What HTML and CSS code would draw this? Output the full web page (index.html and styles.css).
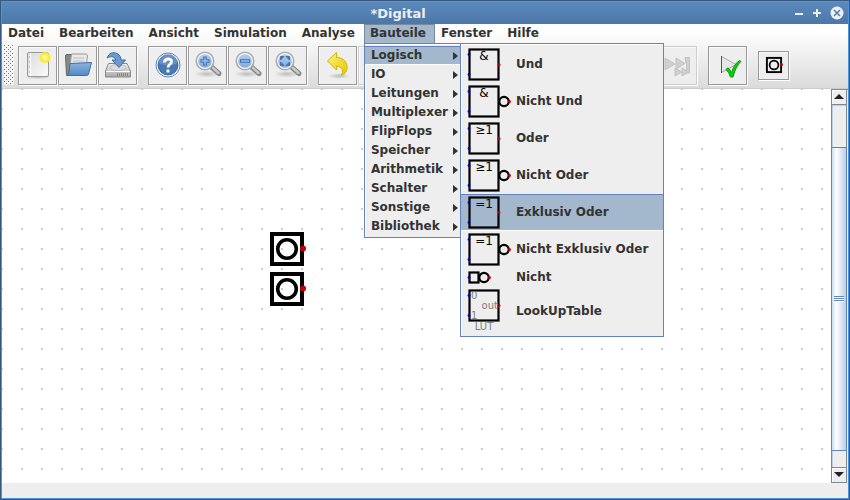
FILE: index.html
```html
<!DOCTYPE html>
<html lang="de">
<head>
<meta charset="utf-8">
<title>*Digital</title>
<link rel="stylesheet" href="styles.css">
</head>
<body>
<svg class="defs" aria-hidden="true">
  <defs>
    <linearGradient id="lens" x1="0" y1="0" x2="0" y2="1"><stop offset="0" stop-color="#b9d2ee"/><stop offset="1" stop-color="#7ba6d8"/></linearGradient>
    <linearGradient id="paper" x1="0" y1="0" x2="1" y2="1"><stop offset="0" stop-color="#dcdcdc"/><stop offset="1" stop-color="#fafafa"/></linearGradient>
    <linearGradient id="folder" x1="0" y1="0" x2="0" y2="1"><stop offset="0" stop-color="#8db5e0"/><stop offset="1" stop-color="#5488c4"/></linearGradient>
    <linearGradient id="metal" x1="0" y1="0" x2="0" y2="1"><stop offset="0" stop-color="#f2f2f2"/><stop offset="1" stop-color="#a8a8a8"/></linearGradient>
    <radialGradient id="glow"><stop offset="0" stop-color="#fffde0"/><stop offset=".3" stop-color="#fff27a"/><stop offset=".7" stop-color="#f5ec20"/><stop offset="1" stop-color="#f8f060" stop-opacity="0"/></radialGradient>
    <radialGradient id="shade"><stop offset="0" stop-color="#999" stop-opacity=".6"/><stop offset="1" stop-color="#999" stop-opacity="0"/></radialGradient>
    <linearGradient id="gold" x1="0" y1="0" x2="1" y2="1"><stop offset="0" stop-color="#fff27a"/><stop offset="1" stop-color="#e6c800"/></linearGradient>
    <g id="magnifier">
      <ellipse cx="14" cy="25" rx="13" ry="3.5" fill="url(#shade)"/>
      <path d="M19 18.500l7 6" stroke="#888" stroke-width="5" stroke-linecap="round"/>
      <path d="M20 19l5.500 5" stroke="#c9c9c9" stroke-width="2.4" stroke-linecap="round"/>
      <circle cx="12" cy="12" r="8.4" fill="url(#lens)" stroke="#aaa" stroke-width="2.2"/>
      <circle cx="12" cy="12" r="7.4" fill="none" stroke="#f4f6fa" stroke-width="1.2"/>
    </g>
    <g id="gate-box">
      <rect x="2.5" y="1.5" width="29" height="30" fill="none" stroke="#000" stroke-width="2.2"/>
      <circle cx="2" cy="6.500" r="1.4" fill="#00c"/>
      <circle cx="2" cy="26.500" r="1.4" fill="#00c"/>
    </g>
    <g id="out-plain"><circle cx="32" cy="16.500" r="1.5" fill="#c00"/></g>
    <g id="out-inverted">
      <circle cx="37" cy="16.500" r="4.700" fill="none" stroke="#000" stroke-width="2.2"/>
      <circle cx="42.500" cy="16.500" r="1.5" fill="#c00"/>
    </g>
    <g id="input-pin">
      <rect x="4" y="4" width="30" height="30" fill="none" stroke="#000" stroke-width="4"/>
      <circle cx="19" cy="19" r="9.300" fill="none" stroke="#000" stroke-width="3.6"/>
      <circle cx="35" cy="18.500" r="3" fill="#c00000"/>
    </g>
  </defs>
</svg>
<div class="window">
  <header class="titlebar">
    <h1>*Digital</h1>
    <button aria-label="Minimieren"><svg width="10" height="10"><path d="M1 6h8" stroke="#eee" stroke-width="2"/></svg></button>
    <button aria-label="Maximieren"><svg width="10" height="10"><path d="M1 5h8M5 1v8" stroke="#eee" stroke-width="2"/></svg></button>
    <button aria-label="Schließen"><svg width="14" height="14"><circle cx="7" cy="7" r="6.500" fill="#eef2f7"/><path d="M4 4l6 6M10 4l-6 6" stroke="#5280b2" stroke-width="1.600"/></svg></button>
  </header>
  <div class="bars">
  <nav>
    <ul class="menubar">
      <li><button>Datei</button></li>
      <li><button>Bearbeiten</button></li>
      <li><button>Ansicht</button></li>
      <li><button>Simulation</button></li>
      <li><button>Analyse</button></li>
      <li class="open"><button>Bauteile</button>
        <ul class="menu">
          <li class="selected"><button class="parent">Logisch</button></li>
          <li><button class="parent">IO</button></li>
          <li><button class="parent">Leitungen</button></li>
          <li><button class="parent">Multiplexer</button></li>
          <li><button class="parent">FlipFlops</button></li>
          <li><button class="parent">Speicher</button></li>
          <li><button class="parent">Arithmetik</button></li>
          <li><button class="parent">Schalter</button></li>
          <li><button class="parent">Sonstige</button></li>
          <li><button class="parent">Bibliothek</button></li>
        </ul>
        <ul class="menu submenu">
          <li><button class="part"><svg width="44" height="33"><use href="#gate-box"/><use href="#out-plain"/><text class="sym" x="17" y="12">&amp;</text></svg>Und</button></li>
          <li><button class="part"><svg width="44" height="33"><use href="#gate-box"/><use href="#out-inverted"/><text class="sym" x="17" y="12">&amp;</text></svg>Nicht Und</button></li>
          <li><button class="part"><svg width="44" height="33"><use href="#gate-box"/><use href="#out-plain"/><text class="sym" x="17" y="12">≥1</text></svg>Oder</button></li>
          <li><button class="part"><svg width="44" height="33"><use href="#gate-box"/><use href="#out-inverted"/><text class="sym" x="17" y="12">≥1</text></svg>Nicht Oder</button></li>
          <li class="selected"><button class="part"><svg width="44" height="33"><use href="#gate-box"/><use href="#out-plain"/><text class="sym" x="17" y="12">=1</text></svg>Exklusiv Oder</button></li>
          <li><button class="part"><svg width="44" height="33"><use href="#gate-box"/><use href="#out-inverted"/><text class="sym" x="17" y="12">=1</text></svg>Nicht Exklusiv Oder</button></li>
          <li><button class="part small"><svg width="44" height="13"><rect x="2.500" y="1.500" width="9" height="10" fill="none" stroke="#000" stroke-width="2.200"/><circle cx="17" cy="6.500" r="4.700" fill="none" stroke="#000" stroke-width="2.200"/><circle cx="2" cy="6.500" r="1.400" fill="#00c"/><circle cx="22.500" cy="6.500" r="1.500" fill="#c00"/></svg>Nicht</button></li>
          <li><button class="part tall"><svg width="44" height="44"><use href="#gate-box"/><use href="#out-plain"/><text class="pin" x="4" y="10">0</text><text class="pin" x="4" y="30">1</text><text class="pin end" x="31" y="20">out</text><text class="sym caption" x="17" y="41">LUT</text></svg>LookUpTable</button></li>
        </ul>
      </li>
      <li><button>Fenster</button></li>
      <li><button>Hilfe</button></li>
    </ul>
  </nav>
  <div class="toolbar" role="toolbar">
    <span class="grip"></span>
    <div class="group">
      <button aria-label="Neu"><svg width="32" height="32">
        <ellipse cx="16" cy="28" rx="14" ry="2.500" fill="url(#shade)"/>
        <rect x="5.500" y="3.500" width="21" height="24" rx="1.500" fill="url(#paper)" stroke="#999"/>
        <path d="M8.500 4v23" stroke="#fff"/><path d="M7 8h1M7 13h1M7 18h1M7 23h1" stroke="#999"/>
        <circle cx="23" cy="8.500" r="6.500" fill="url(#glow)"/></svg></button>
      <button aria-label="Öffnen"><svg width="32" height="32">
        <path d="M4.500 25.500L3.500 7q0-1.500 1.500-1.500h5l2 2h11v17z" fill="#888" stroke="#666"/>
        <path d="M7.500 20L9.500 5h15l1 2-2 14z" fill="#e9e9e9" stroke="#999"/><path d="M11 9h11M11 12h11" stroke="#bbb"/>
        <path d="M8 14.500l21.500-1-3 11.500q-.3 1.500-2 1.500H4.500q2-1 2.500-3z" fill="url(#folder)" stroke="#3b6ea8"/></svg></button>
      <button aria-label="Speichern"><svg width="32" height="32">
        <path d="M6.500 14.500h18.500l3.500 7.500v6h-25v-6z" fill="url(#metal)" stroke="#888"/>
        <path d="M4 22.500h24" stroke="#fff"/><ellipse cx="16" cy="18.500" rx="8" ry="3" fill="#ddd" stroke="#bbb"/>
        <path d="M15 25.500h11" stroke="#888" stroke-width="3" stroke-dasharray="1 1"/>
        <path d="M5 9C7 4 11 2.500 15 4.500c3 1.500 4 4 4 6.500h4.500L17 18.500 10 11h3.500c0-3-4-4.500-8.500-2z" fill="#6e9acb" stroke="#3b6ea8"/></svg></button>
    </div>
    <div class="group">
      <button aria-label="Hilfe"><svg width="32" height="32">
        <circle cx="16" cy="16" r="12" fill="#fff" stroke="#5d82ad"/><circle cx="16" cy="16" r="10" fill="#4b78b2" stroke="#3867a5"/>
        <path d="M6.500 14a9.500 9.500 0 0 1 19 0q-9 5-19 0z" fill="#86a8d2" opacity=".5"/>
        <path d="M12.500 13.500c0-4.500 7-4.500 7-1 0 3-3.500 2.500-3.500 6M16 20.500v3" fill="none" stroke="#fff" stroke-width="2.800"/></svg></button>
      <button aria-label="Vergrößern"><svg width="32" height="32" viewBox="-1 0 32 32"><use href="#magnifier"/><path d="M12 7.500v9M7.500 12h9" stroke="#3f75b5" stroke-width="3.600"/><path d="M12 8.500v7M8.500 12h7" stroke="#9dc0e8" stroke-width="1.400"/></svg></button>
      <button aria-label="Verkleinern"><svg width="32" height="32" viewBox="-1 0 32 32"><use href="#magnifier"/><path d="M7 12h10" stroke="#3f75b5" stroke-width="3.600"/><path d="M8 12h8" stroke="#9dc0e8" stroke-width="1.400"/></svg></button>
      <button aria-label="Einpassen"><svg width="32" height="32" viewBox="-1 0 32 32"><use href="#magnifier"/><path d="M7.500 11V7.500H11zM13 7.500h3.500V11zM7.500 13v3.500H11zM16.500 13v3.500H13z" fill="#3f75b5" stroke="#3f75b5"/></svg></button>
    </div>
    <div class="group">
      <button aria-label="Rückgängig"><svg width="32" height="32">
        <ellipse cx="17" cy="27" rx="11" ry="3" fill="url(#shade)"/>
        <path d="M5.500 12L14.500 3.500v5c7 0 11 5 10.500 11-.3 3-2 6-6 6.500 3-3 2-8-4.500-9v4z" fill="url(#gold)" stroke="#d2b400"/></svg></button>
      <button disabled aria-label="Wiederholen"></button>
    </div>
    <div class="group">
      <button disabled aria-label="Zurück"></button>
      <button disabled aria-label="Vor"></button>
    </div>
    <div class="group">
      <button disabled aria-label="Start"></button>
      <button disabled aria-label="Stopp"></button>
      <button disabled aria-label="Takt"></button>
      <button disabled aria-label="Schritt"></button>
      <button disabled aria-label="Bis Break"><svg width="32" height="32">
        <path d="M3 9v12l10-6zM14 9v11l9-5.500zM13 19v8l7-4zM20 19v8l7-4z" fill="#d0d0d0" stroke="#c2c2c2"/><path d="M23 8.500h4.500V24h-3V16z" fill="#d0d0d0" stroke="#c2c2c2"/></svg></button>
    </div>
    <div class="group">
      <button aria-label="Test"><svg width="32" height="32">
        <path d="M9.500 7.500v16L24 15.500z" fill="#e6e6e6" stroke="#aaa"/><path d="M9.500 7v17" stroke="#555"/>
        <path d="M14 20.500q2-3 4 .5l1.500 3Q22 15 27.500 11.500L29 12.500q-5 4-8 15.500h-2.500q-1.500-5-4.500-7.500z" fill="#00dc00" stroke="#168c16"/></svg></button>
    </div>
    <button class="compact" aria-label="Eingang"><svg width="18" height="18" viewBox="0 0 38 38"><use href="#input-pin"/></svg></button>
  </div>
  </div>
  <main>
    <div class="circuit">
      <svg class="node first" width="38" height="38"><use href="#input-pin"/></svg>
      <svg class="node second" width="38" height="38"><use href="#input-pin"/></svg>
    </div>
    <div class="scrollbar">
      <button aria-label="Nach oben"><svg width="10" height="6"><path d="M5 0l5 5H0z" fill="#222"/></svg></button>
      <div class="track"><div class="thumb"><span class="ridges"></span></div></div>
      <button aria-label="Nach unten"><svg width="10" height="6"><path d="M5 5l5-5H0z" fill="#222"/></svg></button>
    </div>
  </main>
  <footer></footer>
</div>
</body>
</html>
```
FILE: styles.css
```css
* { box-sizing: border-box; }
body {
  margin: 0;
  font: bold 12px/19px "DejaVu Sans", sans-serif;
  color: #333;
}
button {
  margin: 0;
  padding: 0;
  border: 0;
  background: none;
  font: inherit;
  color: inherit;
}
ul { list-style: none; margin: 0; padding: 0; }
svg { display: block; flex: none; }
.defs { position: absolute; width: 0; height: 0; }
.window {
  display: flex;
  flex-direction: column;
  height: 100vh;
  border: 1px solid #35597f;
  box-shadow: inset 0 0 0 1px #4f93dc;
  padding: 0 1px 1px;
}
.titlebar {
  display: flex;
  align-items: center;
  gap: 8px;
  height: 23px;
  flex: none;
  padding: 0 4px 0 8px;
  border-top: 1px solid #5f92cb;
  background: linear-gradient(#5b89bc, #4c78a8);
}
.titlebar h1 {
  flex: 1;
  margin: 0;
  font-size: 13px;
  text-align: center;
  color: #eee;
}
.bars { background: linear-gradient(#fff, #fff 10%, #dadada); flex: none; }
.menubar { display: flex; }
.menubar > li { position: relative; }
.menubar > li > button { height: 19px; padding: 0 8px 0 6px; border-right: 1px solid transparent; }
.menubar > li.open > button { background: #a3b8cc; border-right-color: #7a8a99; box-shadow: inset 1px 1px #7a8a99; }
.menu {
  position: absolute;
  z-index: 2;
  top: 100%;
  left: 0;
  min-width: 98px;
  padding: 2px 0 1px;
  border: 1px solid #6382bf;
  background: #eee;
  box-shadow: inset 1px 1px #fff;
}
.submenu { left: 96px; z-index: 3; }
.menu button { display: flex; align-items: center; width: 100%; white-space: nowrap; text-align: left; }
.menu .selected button { background: #a3b8cc; box-shadow: inset 0 1px #6382bf, inset 0 -1px #fff; }
.menu .parent { height: 19px; padding: 0 3px 0 6px; gap: 4px; }
.parent::after {
  content: "";
  margin-left: auto;
  border: 4px solid transparent;
  border-left: 5px solid #333;
  border-right: 0;
}
.menu .part { height: 37px; padding: 0 15px 0 6px; gap: 5px; }
.menu .small { height: 19px; }
.menu .tall { height: 48px; }
.sym { font: 12px "DejaVu Sans", sans-serif; text-anchor: middle; fill: #000; }
.pin { font: 10px "DejaVu Sans", sans-serif; fill: #808080; }
.end { text-anchor: end; }
.caption { font-size: 10px; fill: #808080; }
.toolbar {
  display: flex;
  align-items: center;
  gap: 11px;
  height: 46px;
  padding: 0 2px 1px;
  border-bottom: 1px solid #ccc;
}
.grip {
  width: 10px;
  height: 40px;
  margin-right: -7px;
  background-color: #f4f4f4;
  background-image: conic-gradient(at 1px 1px, transparent 75%, #777 0), conic-gradient(at 1px 1px, transparent 75%, #777 0);
  background-position: 0 0, 2px 2px;
  background-size: 4px 4px;
}
.group { display: flex; gap: 1px; }
.group button, .compact {
  display: grid;
  place-items: center;
  width: 39px;
  height: 39px;
  border: 1px solid #999;
  background: #eee;
  box-shadow: inset 1px 1px #f8f8f8, 1px 1px #fff;
}
.group button:disabled { border-color: #ccc; }
.compact { width: 31px; height: 29px; }
main { display: flex; flex: 1; min-height: 0; background: #fff; }
.circuit {
  position: relative;
  flex: 1;
  background-image: conic-gradient(at 2px 2px, transparent 75%, #ccc 0);
  background-size: 20px 20px;
  background-position: -1px -1px;
}
.node { position: absolute; left: 266px; }
.first { top: 141px; }
.second { top: 181px; }
.scrollbar {
  display: flex;
  flex-direction: column;
  width: 17px;
  padding-right: 1px;
  border-left: 1px solid #7a8a99;
  border-top: 1px solid #7a8a99;
  background: #eee;
}
.scrollbar button {
  display: grid;
  place-items: center;
  height: 15px;
  border: 1px solid #7a8a99;
  border-width: 0 1px 1px 0;
  box-shadow: inset 1px 1px #fff;
}
.track {
  flex: 1;
  padding: 42px 0 16px;
  border: 1px solid #7a8a99;
  border-width: 0 1px 1px 0;
  box-shadow: inset 1px 1px #b8cfe5;
}
.thumb {
  display: grid;
  place-items: center;
  height: 100%;
  margin: 0 -1px;
  border: 1px solid #6382bf;
  background: linear-gradient(90deg, #c8ddf2, #fff 30%, #b8cfe5);
}
.ridges {
  width: 10px;
  height: 6px;
  background: repeating-linear-gradient(#6382bf 0 1px, #fff 1px 2px);
}
footer { height: 15px; flex: none; background: #eee; }
```
